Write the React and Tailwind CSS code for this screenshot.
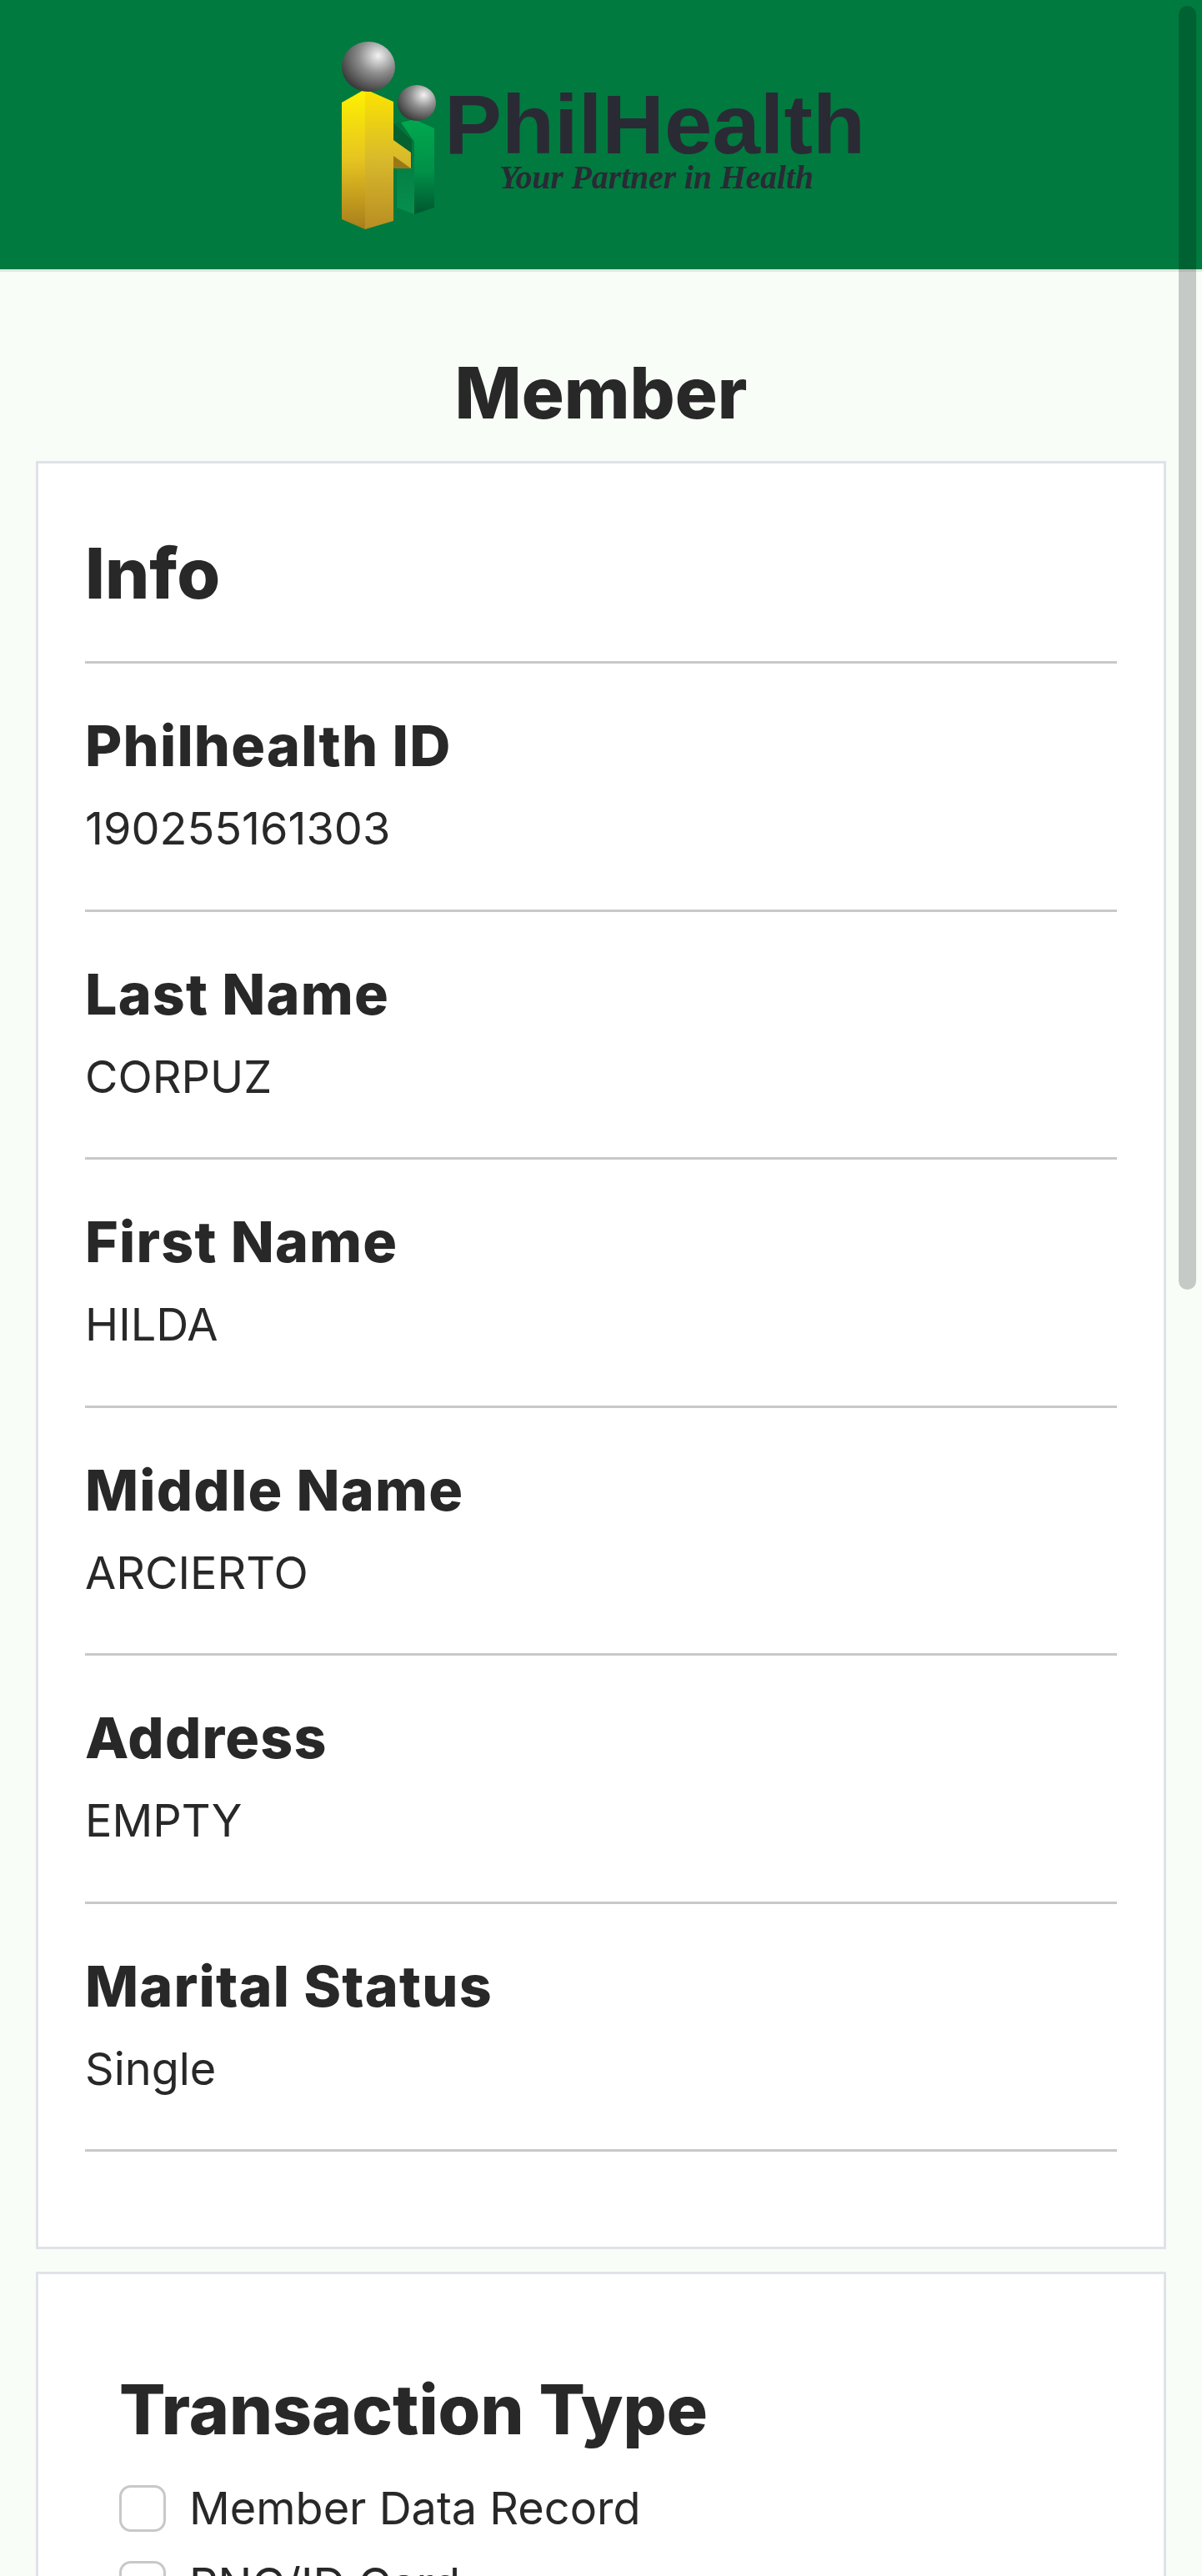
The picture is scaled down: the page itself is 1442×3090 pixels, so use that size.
import React from "react";

const fields = [
  { label: "Philhealth ID", value: "190255161303" },
  { label: "Last Name", value: "CORPUZ" },
  { label: "First Name", value: "HILDA" },
  { label: "Middle Name", value: "ARCIERTO" },
  { label: "Address", value: "EMPTY" },
  { label: "Marital Status", value: "Single" },
];

const transactionTypes = ["Member Data Record", "PNC/ID Card"];

function Logo() {
  return (
    <svg width="640" height="240" viewBox="0 0 640 240" className="block">
      <defs>
        <radialGradient id="ballBig" cx="0.68" cy="0.28" r="0.8">
          <stop offset="0" stopColor="#f2f2f2" />
          <stop offset="0.45" stopColor="#8d8d8d" />
          <stop offset="1" stopColor="#333333" />
        </radialGradient>
        <linearGradient id="yellowLeft" x1="0" y1="0" x2="0" y2="1">
          <stop offset="0" stopColor="#fff200" />
          <stop offset="0.5" stopColor="#e6c420" />
          <stop offset="1" stopColor="#a87d1c" />
        </linearGradient>
        <linearGradient id="yellowRight" x1="0" y1="0" x2="0" y2="1">
          <stop offset="0" stopColor="#fce400" />
          <stop offset="0.5" stopColor="#d8b92c" />
          <stop offset="1" stopColor="#b88e22" />
        </linearGradient>
        <linearGradient id="greenRight" x1="0" y1="0" x2="0" y2="1">
          <stop offset="0" stopColor="#00a84f" />
          <stop offset="0.55" stopColor="#019048" />
          <stop offset="1" stopColor="#00562f" />
        </linearGradient>
        <linearGradient id="greenLeft" x1="0" y1="0" x2="0" y2="1">
          <stop offset="0" stopColor="#04703a" />
          <stop offset="1" stopColor="#068f4e" />
        </linearGradient>
      </defs>
      {/* small figure */}
      <path d="M62 113 L87 108 L87 222 L66 214 V160 L62 150 Z" fill="url(#greenLeft)" />
      <path d="M71 112 L87 108 L111 119 V214 L87 222 V135 Z" fill="url(#greenRight)" />
      <path d="M62 113 L84 133 V167 L62 142 Z" fill="#03622f" />
      <ellipse cx="90" cy="88.5" rx="23" ry="21.5" fill="url(#ballBig)" />
      {/* big figure */}
      <path d="M0 88 L28 72 L28 240 L0 228 Z" fill="url(#yellowLeft)" />
      <path d="M28 72 L62 87 V133 L83 148 V167 L62 167 V230 L28 240 Z" fill="url(#yellowRight)" />
      <path d="M62 152 L83 167 L62 167 Z" fill="#9c7716" />
      <ellipse cx="32" cy="45" rx="32" ry="30" fill="url(#ballBig)" />
      <text x="123" y="149" fill="#2a2a35" fontFamily="Liberation Sans, sans-serif" fontWeight="700" fontSize="101" textLength="505" lengthAdjust="spacingAndGlyphs">PhilHealth</text>
      <text x="189" y="191" fill="#2a2a35" fontFamily="Liberation Serif, serif" fontStyle="italic" fontWeight="700" fontSize="40" textLength="377" lengthAdjust="spacingAndGlyphs">Your Partner in Health</text>
    </svg>
  );
}

export default function App() {
  return (
    <div className="relative h-[3090px] overflow-hidden bg-[#f8fdf8] font-['Inter',sans-serif] text-[#282828]">
      <header className="flex h-[326px] justify-center border-b-[3px] border-[#e0e8e4] bg-[#007a3f] pt-[35px]">
        <div className="ml-[18px]">
          <Logo />
        </div>
      </header>

      <h1 className="mt-[96px] text-center text-[85px] leading-[100px] font-extrabold">Member</h1>

      <main className="mx-[43px] mt-[31px] flex flex-col gap-[27px]">
        <section className="h-[2145px] border-[3px] border-[#dfe3e8] bg-white px-[56px]">
          <h2 className="flex h-[240px] items-center border-b-[3px] border-[#c8c8c8] pt-[26px] text-[84px] leading-none font-extrabold">Info</h2>
          {fields.map((field) => (
            <div key={field.label} className="h-[297.5px] border-b-[3px] border-[#c8c8c8] pt-[58px]">
              <h3 className="text-[68px] leading-[80px] font-extrabold tracking-[1.2px]">{field.label}</h3>
              <p className="mt-[25px] text-[54px] leading-[70px]">{field.value}</p>
            </div>
          ))}
        </section>

        <section className="border-[3px] border-[#dfe3e8] bg-white px-[97px] pt-[113px]">
          <h2 className="text-[82px] leading-[100px] font-extrabold">Transaction Type</h2>
          <div className="mt-[40px] flex flex-col gap-[35px]">
            {transactionTypes.map((type) => (
              <label key={type} className="flex items-center gap-[28px]">
                <span className="h-[56px] w-[56px] rounded-[14px] border-[3px] border-[#c8c8c8] bg-white" />
                <span className="text-[54px] leading-[56px]">{type}</span>
              </label>
            ))}
          </div>
        </section>
      </main>

      {/* overlay scrollbar */}
      <div className="absolute top-[7px] left-[1414px] h-[1540px] w-[21px] rounded-full bg-black/20" />
    </div>
  );
}
